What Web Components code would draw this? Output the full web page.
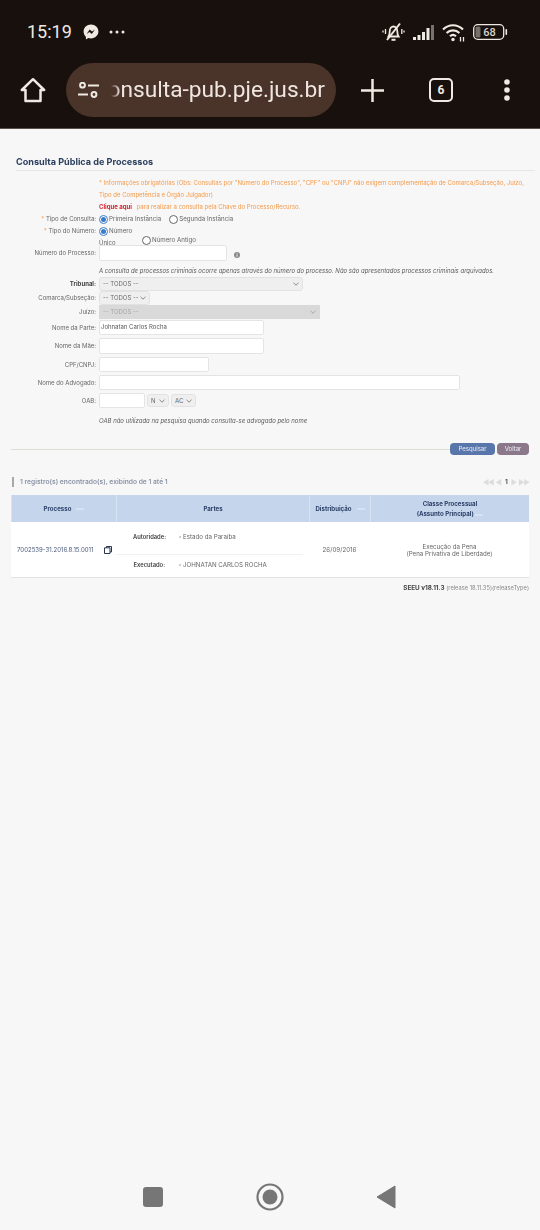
<!DOCTYPE html>
<html lang="pt-BR">
<head>
<meta charset="utf-8">
<title>Consulta Pública de Processos</title>
<style>
  html, body { margin: 0; padding: 0; background: #f7f7f7; }
  body { width: 540px; height: 1230px; overflow: hidden; font-family: Inter, "Liberation Sans", sans-serif; display: flex; flex-direction: column; }
  /* the reference is a soft capture */
  search-form, form-actions, result-bar, result-table, version-line { filter: blur(.25px); }
</style>
</head>
<body>
<browser-header></browser-header>
<search-form>
  <form-row label="* Tipo de Consulta:" h="12"><radio-option checked>Primeira Instância</radio-option><radio-option>Segunda Instância</radio-option></form-row>
  <form-row label="* Tipo do Número:" h="20" top><number-type></number-type></form-row>
  <form-row label="Número do Processo:" h="16"><text-field w="128"></text-field><info-dot></info-dot></form-row>
  <form-row h="16"><i class="note">A consulta de processos criminais ocorre apenas através do número do processo. Não são apresentados processos criminais arquivados.</i></form-row>
  <form-row label="Tribunal:" strong h="12"><select-box w="204">-- TODOS --</select-box></form-row>
  <form-row label="Comarca/Subseção:" h="12" mt="2"><select-box w="51">-- TODOS --</select-box></form-row>
  <form-row label="Juízo:" h="12" mt="2"><select-box w="221" disabled>-- TODOS --</select-box></form-row>
  <form-row label="Nome da Parte:" h="15" mt="3"><text-field w="165">Johnatan Carlos Rocha</text-field></form-row>
  <form-row label="Nome da Mãe:" h="16" mt="3"><text-field w="165"></text-field></form-row>
  <form-row label="CPF/CNPJ:" h="15" mt="3"><text-field w="110"></text-field></form-row>
  <form-row label="Nome do Advogado:" h="15" mt="3"><text-field w="361"></text-field></form-row>
  <form-row label="OAB:" h="15" mt="3"><text-field w="46"></text-field><select-box w="22" mini>N</select-box><select-box w="25" mini>AC</select-box></form-row>
  <form-row h="12" mt="4"><i class="note">OAB não utilizada na pesquisa quando consulta-se advogado pelo nome</i></form-row>
</search-form>
<form-actions></form-actions>
<result-bar></result-bar>
<result-table></result-table>
<version-line></version-line>
<nav-bar></nav-bar>

<script>
class BrowserHeader extends HTMLElement {
  connectedCallback() {
    this.attachShadow({ mode: 'open' });
    this.shadowRoot.innerHTML = `
      <style>
        :host { display: block; height: 129px; box-sizing: border-box; background: #17100c; border-bottom: 1px solid #5a5148; color: #efe9e3; font-family: Roboto, sans-serif; flex: none; }
        svg { display: block; flex: none; }
        .status { height: 63px; box-sizing: border-box; padding: 1px 32px 0 27px; display: flex; align-items: center; }
        .time { font-size: 18px; line-height: 20px; margin-right: 11px; }
        .dots { margin-left: 10px; }
        .gap { flex: 1; }
        .status .right { display: flex; align-items: center; gap: 7px; }
        .tools { height: 54px; display: flex; align-items: center; }
        .home { margin-left: 20px; }
        .pill { margin-left: 20px; width: 270px; height: 54px; border-radius: 27px; background: #4a3329; display: flex; align-items: center; padding-left: 12px; box-sizing: border-box; }
        .url { width: 219px; margin-left: 7px; display: flex; justify-content: flex-end; font-size: 22.700px; line-height: 30px; white-space: nowrap; color: #f0e7e1; -webkit-mask-image: linear-gradient(90deg, transparent 5px, #000 14px); mask-image: linear-gradient(90deg, transparent 5px, #000 14px); }
        .plus { margin-left: 25px; }
        .tab { margin-left: 45px; width: 24px; height: 24px; box-sizing: border-box; border: 2.500px solid #efe9e3; border-radius: 5px; display: flex; align-items: center; justify-content: center; font-size: 12px; font-weight: 700; }
        .more { margin-left: 51px; }
      </style>
      <div class="status">
        <span class="time">15:19</span>
        <svg width="16" height="16" viewBox="0 0 16 16"><path fill="#efe9e3" d="M8 .6C3.8.6.6 3.6.6 7.6c0 2.1.9 3.9 2.300 5.200v2.600l2.400-1.300c.8.2 1.700.3 2.700.3 4.200 0 7.400-3 7.400-6.800S12.200.6 8 .6z"/><path fill="#17100c" d="M3.600 9.900l3.100-4.300 2.300 1.800 2.900-1.800-3.100 4.300-2.300-1.800z"/></svg>
        <svg class="dots" width="16" height="4" viewBox="0 0 16 4" fill="#efe9e3"><circle cx="2" cy="2" r="1.500"/><circle cx="8" cy="2" r="1.500"/><circle cx="14" cy="2" r="1.500"/></svg>
        <span class="gap"></span>
        <div class="right">
          <svg width="23" height="20" viewBox="0 0 23 20" fill="none" stroke="#efe9e3" stroke-width="1.800"><path d="M6.500 14.500c1-1.500 1.200-3 1.200-5 0-3 1.700-5 3.800-5s3.800 2 3.800 5c0 2 .3 3.500 1.300 5z"/><path d="M9.500 17.800h4" stroke-width="2"/><path d="M5 18L18 1.500" stroke-width="2"/><path d="M3.500 7v5M1 8.500v2M19.800 7v5M22 8.500v2" stroke-width="1.300"/></svg>
          <svg width="23" height="17" viewBox="0 0 23 17" fill="#efe9e3"><rect x="1" y="13" width="3" height="3"/><rect x="5.500" y="11" width="3" height="5"/><rect x="10" y="8" width="3" height="8"/><rect x="14.500" y="4" width="3" height="12"/><rect x="19" y="1" width="3" height="15" opacity=".45"/></svg>
          <svg width="24" height="19" viewBox="0 0 24 19" fill="none" stroke="#efe9e3" stroke-width="2.200"><path d="M1 6.500C6.800 .8 15.200 .8 21 6.500"/><path d="M4.600 10c3.600-3.500 9.200-3.500 12.800 0"/><path d="M8 13.300c1.800-1.600 4.200-1.600 6 0"/><circle cx="11" cy="16.500" r="1.700" fill="#efe9e3" stroke="none"/><path d="M18.500 14v4.500M21.500 14v4.500" stroke-width="1.300"/></svg>
          <svg width="35" height="16" viewBox="0 0 35 16"><rect x=".7" y=".7" width="30" height="14.600" rx="4" fill="none" stroke="#efe9e3" stroke-width="1.300"/><rect x="2.500" y="2.500" width="5" height="11" rx="1.500" fill="#77706a"/><rect x="32.500" y="5" width="1.600" height="6" rx=".8" fill="#efe9e3"/><text x="16.500" y="12" text-anchor="middle" font-family="Roboto" font-size="11" font-weight="500" fill="#d9d4cf">68</text></svg>
        </div>
      </div>
      <div class="tools">
        <svg class="home" width="26" height="26" viewBox="0 0 26 26" fill="none" stroke="#efe9e3" stroke-width="2.500" stroke-linejoin="round"><path d="M1.800 13L13 2.200 24.200 13H20.500v11H5.500V13z"/></svg>
        <div class="pill">
          <svg width="21" height="16" viewBox="0 0 21 16" fill="none" stroke="#efe9e3" stroke-width="2"><circle cx="4.500" cy="3.200" r="2.400"/><path d="M10 3.500h11M0 12.500h10"/><circle cx="16" cy="12.500" r="2.400"/></svg>
          <div class="url"><span>onsulta-pub.pje.jus.br</span></div>
        </div>
        <svg class="plus" width="23" height="23" viewBox="0 0 23 23" stroke="#efe9e3" stroke-width="2.500"><path d="M11.500 0v23M0 11.500h23"/></svg>
        <div class="tab">6</div>
        <svg class="more" width="6" height="22" viewBox="0 0 6 22" fill="#efe9e3"><circle cx="3" cy="3" r="2.800"/><circle cx="3" cy="11" r="2.800"/><circle cx="3" cy="19" r="2.800"/></svg>
      </div>`;
  }
}

class SearchForm extends HTMLElement {
  connectedCallback() {
    this.attachShadow({ mode: 'open' });
    this.shadowRoot.innerHTML = `
      <style>
        :host { display: block; padding: 25px 5px 0 16px; font-size: 6px; line-height: 12px; color: #666; flex: none; }
        h1 { margin: 0; font-size: 9.100px; line-height: 16px; font-weight: 700; color: #2b3f5e; border-bottom: 1px solid #e6e6e6; height: 17px; box-sizing: border-box; }
        .info { margin: 6px 0 0 83px; color: #f59a4a; width: 430px; }
        .info b { color: #d8202f; font-weight: 700; margin-right: 3px; }
      </style>
      <h1>Consulta Pública de Processos</h1>
      <div class="info">* Informações obrigatórias (Obs: Consultas por "Número do Processo", "CPF" ou "CNPJ" não exigem complementação de Comarca/Subseção, Juízo, Tipo de Competência e Órgão Julgador)<br><b>Clique aqui</b> para realizar a consulta pela Chave do Processo/Recurso.</div>
      <slot></slot>`;
  }
}

class FormRow extends HTMLElement {
  connectedCallback() {
    this.attachShadow({ mode: 'open' });
    const label = this.getAttribute('label') || '';
    const star = label.startsWith('* ');
    const text = star ? label.slice(2) : label;
    this.shadowRoot.innerHTML = `
      <style>
        :host { display: grid; grid-template-columns: 80px 1fr; column-gap: 3px; height: ${this.getAttribute('h')}px; margin-top: ${this.getAttribute('mt') || 0}px; }
        .label { text-align: right; align-self: ${this.hasAttribute('top') ? 'start' : 'center'}; white-space: nowrap; line-height: 12px; color: ${this.hasAttribute('strong') ? '#444' : '#666'}; font-weight: ${this.hasAttribute('strong') ? 700 : 400}; }
        .label span { color: #f59a4a; }
        .box { display: flex; align-items: center; gap: 2px; min-width: 0; white-space: nowrap; }
        ::slotted(i) { color: #5c5c5c; margin-top: 3px; }
      </style>
      <div class="label">${star ? '<span>*</span> ' : ''}${text}</div>
      <div class="box"><slot></slot></div>`;
  }
}

class RadioOption extends HTMLElement {
  connectedCallback() {
    this.attachShadow({ mode: 'open' });
    const dot = this.hasAttribute('checked');
    this.shadowRoot.innerHTML = `
      <style>
        :host { display: inline-flex; align-items: center; margin-right: 6px; font-size: 6.200px; color: #666; flex: none; }
        .r { width: 9px; height: 9px; box-sizing: border-box; border-radius: 50%; border: 1px solid ${dot ? '#3a7cc9' : '#666'}; background: #fff; margin-right: 1px; display: flex; align-items: center; justify-content: center; flex: none; }
        .r i { width: 5px; height: 5px; border-radius: 50%; background: #3a7cc9; }
      </style>
      <span class="r">${dot ? '<i></i>' : ''}</span><slot></slot>`;
  }
}

class NumberType extends HTMLElement {
  connectedCallback() {
    this.attachShadow({ mode: 'open' });
    this.shadowRoot.innerHTML = `
      <style>
        :host { display: flex; height: 20px; }
        .a { width: 43px; display: flex; flex-direction: column; align-items: flex-start; }
        .b { padding-top: 9px; }
        .u { line-height: 11px; color: #666; flex: none; }
      </style>
      <div class="a"><radio-option checked>Número</radio-option><span class="u">Único</span></div>
      <div class="b"><radio-option>Número Antigo</radio-option></div>`;
  }
}

class TextField extends HTMLElement {
  connectedCallback() {
    this.attachShadow({ mode: 'open' });
    this.shadowRoot.innerHTML = `
      <style>
        :host { display: flex; align-items: center; width: ${this.getAttribute('w')}px; height: 100%; box-sizing: border-box; background: #fff; border: 1px solid #e4e4e4; border-radius: 2px; padding: 0 1px 1px; color: #555; flex: none; }
      </style>
      <slot></slot>`;
  }
}

class SelectBox extends HTMLElement {
  connectedCallback() {
    this.attachShadow({ mode: 'open' });
    const off = this.hasAttribute('disabled');
    const mini = this.hasAttribute('mini');
    this.shadowRoot.innerHTML = `
      <style>
        :host { display: flex; align-items: center; justify-content: space-between; width: ${this.getAttribute('w')}px; height: ${mini ? '13px' : '100%'}; box-sizing: border-box; padding: 0 3px; border-radius: ${off ? 0 : 3}px; background: ${off ? '#d9d9d9' : '#efefef'}; border: 1px solid ${off ? '#d9d9d9' : '#e2e2e2'}; color: ${off ? '#a5a5a5' : '#666'}; flex: none; }
        svg { flex: none; }
      </style>
      <span><slot></slot></span>
      <svg width="6" height="4" viewBox="0 0 6 4" fill="none" stroke="${off ? '#aaa' : '#888'}" stroke-width="1"><path d="M.5.8L3 3.200 5.500.8"/></svg>`;
  }
}

class InfoDot extends HTMLElement {
  connectedCallback() {
    this.attachShadow({ mode: 'open' });
    this.shadowRoot.innerHTML = `
      <style>:host { display: flex; margin: 4px 0 0 5px; }</style>
      <svg width="6" height="6" viewBox="0 0 6 6"><circle cx="3" cy="3" r="3" fill="#8a8a8a"/><path d="M3 2.500v2.200M3 1.100v.7" stroke="#fff" stroke-width=".9"/></svg>`;
  }
}

class FormActions extends HTMLElement {
  connectedCallback() {
    this.attachShadow({ mode: 'open' });
    this.shadowRoot.innerHTML = `
      <style>
        :host { display: flex; align-items: center; margin: 19px 11px 0; height: 12px; font-size: 6px; color: #eef0f6; flex: none; }
        .line { flex: 1; height: 1px; background: #deded2; }
        .btn { height: 12px; line-height: 12px; border-radius: 4px; text-align: center; }
        .go { width: 45px; background: #5876aa; }
        .back { width: 32px; margin-left: 2px; background: #8b788a; }
      </style>
      <div class="line"></div>
      <div class="btn go">Pesquisar</div>
      <div class="btn back">Voltar</div>`;
  }
}

class ResultBar extends HTMLElement {
  connectedCallback() {
    this.attachShadow({ mode: 'open' });
    this.shadowRoot.innerHTML = `
      <style>
        :host { display: flex; align-items: center; height: 10px; margin: 22px 11px 0 12px; font-size: 6.700px; font-weight: 600; color: #8b93a6; flex: none; }
        .mark { width: 2px; height: 10px; background: #a9a9a9; margin-right: 6px; }
        .msg { flex: 1; }
        .pager { display: flex; align-items: center; gap: 2px; color: #dcdcdc; letter-spacing: -1px; font-size: 7px; font-weight: 400; }
        .pager b { color: #555; font-size: 6.500px; margin: 0 2px; }
      </style>
      <div class="mark"></div>
      <div class="msg">1 registro(s) encontrado(s), exibindo de 1 até 1</div>
      <div class="pager"><span>◀◀</span><span>◀</span><b>1</b><span>▶</span><span>▶▶</span></div>`;
  }
}

class ResultTable extends HTMLElement {
  connectedCallback() {
    this.attachShadow({ mode: 'open' });
    const sort = '<svg class="sort" width="8" height="2" viewBox="0 0 8 2"><path d="M0 1h8" stroke="#dbe5f4" stroke-width="1.500"/></svg>';
    this.shadowRoot.innerHTML = `
      <style>
        :host { display: grid; grid-template-columns: 105px 193px 61px 1fr; margin: 8px 11px 0; background: #fff; border-bottom: 1px solid #e2e2e2; font-size: 6.200px; color: #666; flex: none; }
        .h { height: 27px; background: #c5d5ec; color: #2b3f66; font-weight: 700; font-size: 6.100px; display: flex; align-items: center; justify-content: center; gap: 5px; text-align: center; line-height: 10px; border-left: 1px solid #d7e2f3; }
        .h:first-child { border-left: 0; }
        .c { height: 55px; display: flex; align-items: center; justify-content: center; text-align: center; line-height: 7px; }
        .proc { justify-content: space-between; padding: 0 4px 0 6px; color: #4a5a78; font-size: 6.050px; white-space: nowrap; }
        .parts { display: flex; flex-direction: column; height: 55px; }
        .p { display: grid; grid-template-columns: 32px 1fr; align-items: center; text-align: left; padding: 0 0 4px 17px; box-sizing: border-box; }
        .p:first-child { height: 32px; }
        .p + .p { height: 23px; border-top: 1px solid #f1f1f1; margin-right: 6px; }
        .p b { font-size: 5.800px; color: #444; font-weight: 600; text-align: right; white-space: nowrap; }
        .p span { margin-left: 14px; white-space: nowrap; }
      </style>
      <div class="h">Processo ${sort}</div>
      <div class="h">Partes</div>
      <div class="h">Distribuição ${sort}</div>
      <div class="h"><span>Classe Processual<br>(Assunto Principal) ${sort}</span></div>
      <div class="c proc"><span>7002539-31.2016.8.15.0011</span>
        <svg width="8" height="8" viewBox="0 0 8 8" fill="none" stroke="#2a3550" stroke-width="1"><path d="M2.500 1.800V.5h5v5.500H6"/><path d="M.5 1.800h5.500v5.700H.5z"/></svg></div>
      <div class="parts">
        <div class="p"><b>Autoridade:</b><span>▫ Estado da Paraíba</span></div>
        <div class="p"><b>Executado:</b><span>▫ JOHNATAN CARLOS ROCHA</span></div>
      </div>
      <div class="c">26/09/2016</div>
      <div class="c">Execução da Pena<br>(Pena Privativa de Liberdade)</div>`;
  }
}

class VersionLine extends HTMLElement {
  connectedCallback() {
    this.attachShadow({ mode: 'open' });
    this.shadowRoot.innerHTML = `
      <style>
        :host { display: block; margin: 6px 11px 0; text-align: right; font-size: 5.750px; line-height: 8px; color: #8a8a8a; flex: none; }
        b { color: #444; font-size: 6.300px; font-weight: 700; }
      </style>
      <b>SEEU v18.11.3</b> (release 18.11.35)(releaseType)`;
  }
}

class NavBar extends HTMLElement {
  connectedCallback() {
    this.attachShadow({ mode: 'open' });
    this.shadowRoot.innerHTML = `
      <style>
        :host { display: flex; align-items: center; margin-top: auto; height: 66px; padding: 0 0 0 143px; flex: none; }
        svg { display: block; flex: none; }
      </style>
      <svg width="20" height="20" viewBox="0 0 20 20"><rect width="20" height="20" rx="3" fill="#767676"/></svg>
      <svg style="margin-left:93px" width="28" height="28" viewBox="0 0 28 28" fill="none"><circle cx="14" cy="14" r="12.500" stroke="#767676" stroke-width="2.200"/><circle cx="14" cy="14" r="7.500" fill="#767676"/></svg>
      <svg style="margin-left:92px" width="20" height="24" viewBox="0 0 20 24"><path d="M19 1v22L1 12z" fill="#767676" stroke="#767676" stroke-linejoin="round"/></svg>`;
  }
}

customElements.define('browser-header', BrowserHeader);
customElements.define('search-form', SearchForm);
customElements.define('form-row', FormRow);
customElements.define('radio-option', RadioOption);
customElements.define('number-type', NumberType);
customElements.define('text-field', TextField);
customElements.define('select-box', SelectBox);
customElements.define('info-dot', InfoDot);
customElements.define('form-actions', FormActions);
customElements.define('result-bar', ResultBar);
customElements.define('result-table', ResultTable);
customElements.define('version-line', VersionLine);
customElements.define('nav-bar', NavBar);
</script>
</body>
</html>
